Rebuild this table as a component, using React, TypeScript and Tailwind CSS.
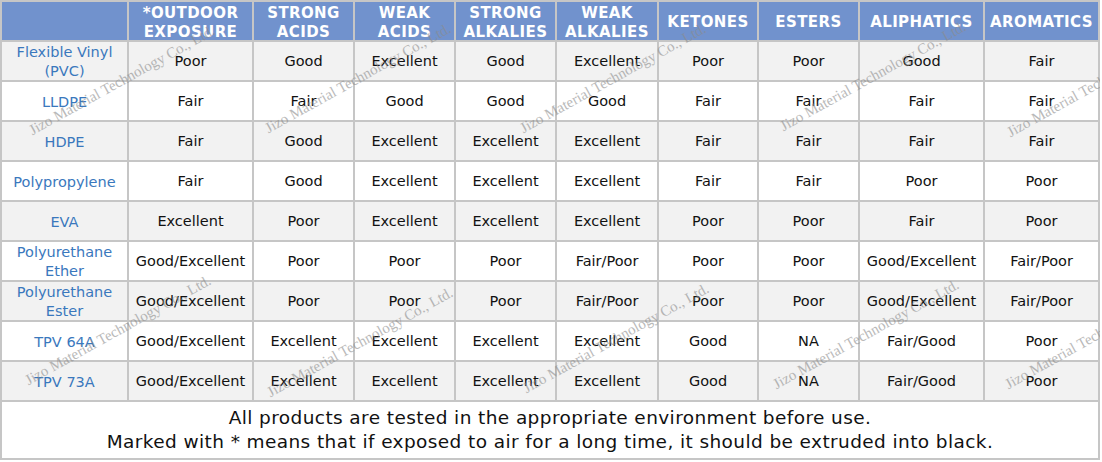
const headers: string[][] = [
  ["*OUTDOOR", "EXPOSURE"],
  ["STRONG", "ACIDS"],
  ["WEAK", "ACIDS"],
  ["STRONG", "ALKALIES"],
  ["WEAK", "ALKALIES"],
  ["KETONES"],
  ["ESTERS"],
  ["ALIPHATICS"],
  ["AROMATICS"],
];

const rows: { name: string[]; values: string[] }[] = [
  { name: ["Flexible Vinyl", "(PVC)"], values: ["Poor", "Good", "Excellent", "Good", "Excellent", "Poor", "Poor", "Good", "Fair"] },
  { name: ["LLDPE"], values: ["Fair", "Fair", "Good", "Good", "Good", "Fair", "Fair", "Fair", "Fair"] },
  { name: ["HDPE"], values: ["Fair", "Good", "Excellent", "Excellent", "Excellent", "Fair", "Fair", "Fair", "Fair"] },
  { name: ["Polypropylene"], values: ["Fair", "Good", "Excellent", "Excellent", "Excellent", "Fair", "Fair", "Poor", "Poor"] },
  { name: ["EVA"], values: ["Excellent", "Poor", "Excellent", "Excellent", "Excellent", "Poor", "Poor", "Fair", "Poor"] },
  { name: ["Polyurethane", "Ether"], values: ["Good/Excellent", "Poor", "Poor", "Poor", "Fair/Poor", "Poor", "Poor", "Good/Excellent", "Fair/Poor"] },
  { name: ["Polyurethane", "Ester"], values: ["Good/Excellent", "Poor", "Poor", "Poor", "Fair/Poor", "Poor", "Poor", "Good/Excellent", "Fair/Poor"] },
  { name: ["TPV 64A"], values: ["Good/Excellent", "Excellent", "Excellent", "Excellent", "Excellent", "Good", "NA", "Fair/Good", "Poor"] },
  { name: ["TPV 73A"], values: ["Good/Excellent", "Excellent", "Excellent", "Excellent", "Excellent", "Good", "NA", "Fair/Good", "Poor"] },
];

// watermark anchors (bottom-left of the text)
const marks = [
  "left-[34px] top-[122px]",
  "left-[270px] top-[120px]",
  "left-[525px] top-[120px]",
  "left-[785px] top-[118px]",
  "left-[1012px] top-[124px]",
  "left-[30px] top-[372px]",
  "left-[272px] top-[384px]",
  "left-[528px] top-[380px]",
  "left-[778px] top-[376px]",
  "left-[1010px] top-[376px]",
];

export default function App() {
  return (
    <div className="bg-white w-[1102px] h-[462px] font-['DejaVu_Sans',Verdana,sans-serif]">
      <div className="relative w-[1100px]">
        <div className="grid grid-cols-[125px_123px_99px_99px_99px_100px_98px_99px_123px_113px] gap-[2px] bg-[#c6c6c6] p-[2px]">
          <div className="h-[38px] bg-[#7192cd]" />
          {headers.map((h, i) => (
            <div
              key={i}
              className="h-[38px] pt-[3px] bg-[#7192cd] flex flex-col items-center justify-center text-white font-bold text-[15px] tracking-[0.4px] leading-[19px] text-center"
            >
              {h.map((l) => (
                <span key={l}>{l}</span>
              ))}
            </div>
          ))}

          {rows.map((r, ri) => {
            const bg = ri % 2 === 0 ? "bg-[#f2f2f2]" : "bg-white";
            return [
              <div
                key={r.name.join() + ri}
                className={`${bg} h-[38px] pt-[2px] flex flex-col items-center justify-center text-[#3a78bd] text-[14.5px] leading-[19px] text-center`}
              >
                {r.name.map((l) => (
                  <span key={l}>{l}</span>
                ))}
              </div>,
              ...r.values.map((v, vi) => (
                <div
                  key={ri + "-" + vi}
                  className={`${bg} h-[38px] pt-[2px] flex items-center justify-center text-[#111] text-[14.5px] text-center`}
                >
                  {v}
                </div>
              )),
            ];
          })}

          <div className="col-span-10 h-[56px] bg-white flex flex-col items-center justify-center text-[#111] text-[18.5px] tracking-[0.4px] leading-[24px] text-center">
            <span>All products are tested in the appropriate environment before use.</span>
            <span>Marked with * means that if exposed to air for a long time, it should be extruded into black.</span>
          </div>
        </div>

        <div className="absolute inset-0 overflow-hidden pointer-events-none">
          {marks.map((m) => (
            <span
              key={m}
              className={`absolute ${m} origin-bottom-left -rotate-[29deg] whitespace-nowrap font-['Liberation_Serif',serif] text-[15px] leading-[16px] text-[#8c8c8c] opacity-60`}
            >
              Jizo Material Technology Co., Ltd.
            </span>
          ))}
        </div>
      </div>
    </div>
  );
}
